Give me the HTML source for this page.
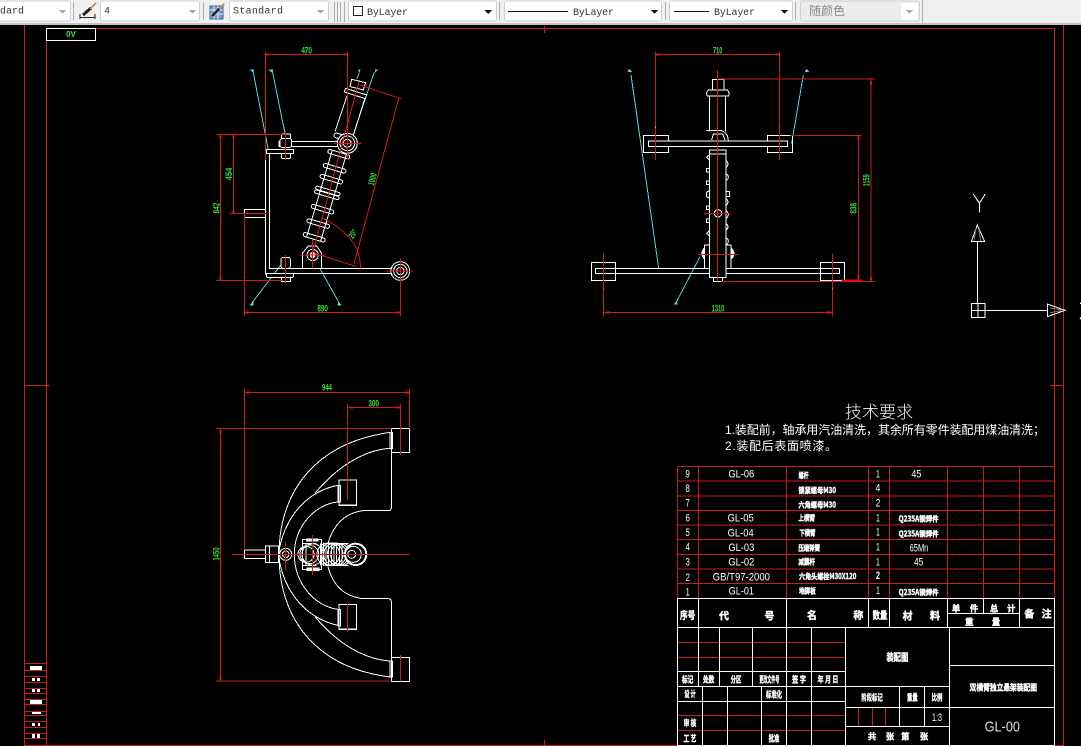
<!DOCTYPE html>
<html lang="zh">
<head>
<meta charset="utf-8">
<title>GL-00</title>
<style>
html,body{margin:0;padding:0;background:#000;width:1081px;height:746px;overflow:hidden}
svg{display:block}
.r{stroke:#cc1c1c;fill:none;stroke-width:3}
.w{stroke:#fff;fill:none;stroke-width:3}
.wb{stroke:#fff;fill:#000;stroke-width:3}
.c{stroke:#55d5d5;fill:none;stroke-width:3}
.g{fill:#35e035;font-family:"Liberation Sans",sans-serif;font-size:27px;font-weight:bold;text-anchor:middle}
.t{fill:#fff;font-family:"Liberation Sans","Noto Sans CJK SC",sans-serif;font-size:32px;text-anchor:middle}
.n{fill:#fff;stroke:#fff;stroke-width:1.2px;font-family:"Noto Sans CJK SC",sans-serif;font-size:23px;font-weight:bold}
.h{fill:#fff;stroke:#fff;stroke-width:1.2px;font-family:"Noto Sans CJK SC",sans-serif;font-size:30px;font-weight:bold;text-anchor:middle}
.s{fill:#fff;stroke:#fff;stroke-width:1.2px;font-family:"Noto Sans CJK SC",sans-serif;font-size:25px;font-weight:bold;text-anchor:middle}
.tb{font-family:"Liberation Mono",monospace;font-size:10px;fill:#333}
</style>
</head>
<body>
<svg width="1081" height="746" viewBox="0 0 1081 746" xmlns="http://www.w3.org/2000/svg" shape-rendering="crispEdges">
<rect width="1081" height="746" fill="#000"/>

<!-- toolbar -->
<rect x="0" y="0" width="1081" height="25" fill="#f0f0f0"/>
<rect x="0" y="23" width="1081" height="2" fill="#c4c4c4"/>
<g fill="#fff" stroke="#cfcfcf">
<rect x="-3" y="1" width="73.500" height="20" rx="2"/>
<rect x="100.500" y="1" width="99" height="20" rx="2"/>
<rect x="229.500" y="1" width="99" height="20" rx="2"/>
<rect x="348.500" y="1" width="148" height="20" rx="2"/>
<rect x="504.500" y="1" width="157" height="20" rx="2"/>
<rect x="669.500" y="1" width="123" height="20" rx="2"/>
<rect x="800.500" y="1" width="119" height="20" rx="2" fill="#ececec"/>
</g>
<rect x="901" y="3" width="17" height="17" fill="#fff"/>
<g stroke="#b0b0b0"><path d="M73.500 2V20M203.500 2V20M334.500 2V22M337.500 2V22M340.500 2V22M344.500 2V22M499.500 2V20M665.500 2V20M795.500 2V20M922.500 0V23"/></g>
<g fill="#a8a8a8"><path d="M59 10h7l-3.500 4zM189 10h7l-3.500 4zM317 10h7l-3.500 4zM906 10h7l-3.500 4z"/></g>
<g fill="#111"><path d="M484 10h8l-4 4zM651 10h7l-3.500 4zM781 10h7l-3.500 4z"/></g>
<text class="tb" x="0" y="13.500" textLength="24">dard</text>
<text class="tb" x="104" y="13.500">4</text>
<text class="tb" x="233" y="13.500" textLength="50">Standard</text>
<rect x="353.500" y="6.500" width="9" height="9" fill="#fff" stroke="#222"/>
<text class="tb" x="367" y="15" textLength="41">ByLayer</text>
<path d="M508 11.500H568M674 11.500H709" stroke="#111"/>
<text class="tb" x="573" y="15" textLength="41">ByLayer</text>
<text class="tb" x="714" y="15" textLength="41">ByLayer</text>
<text x="809" y="15" font-family="'Noto Sans CJK SC',sans-serif" font-size="12" fill="#8a8a8a">随颜色</text>
<!-- toolbar icons -->
<g fill="none" stroke="#222"><path d="M80 17.500H95M80 14V19M95 14V19"/><path d="M83 15L91 8" stroke-width="3"/></g>
<path d="M90 9L96 3" stroke="#c08a50" stroke-width="2"/>
<rect x="210" y="6" width="13" height="13" fill="#6f9ad0" stroke="#3e5f9a"/>
<path d="M210 10H223M214 6V19M218 6V19M210 14H223" stroke="#dfe9f6" stroke-width=".7"/>
<path d="M212 16L219 9" stroke="#222" stroke-width="2.500"/>
<path d="M219 9L224 4" stroke="#c08a50" stroke-width="2"/>

<!-- frame -->
<g fill="none" stroke="#cc1c1c">
<path d="M24.500 25V745.500H1063.500V25"/>
<path d="M46.500 28.500H1054.500V745.500M46.500 28.500V745.500"/>
<path d="M24 385.500H50M1050 385.500H1063M544.500 26V33M544.500 740V746"/>
<path d="M24 663.500H46M24 670.500H46M24 676.500H46M24 682.500H46M24 688.500H46M24 693.500H46M24 699.500H46M24 704.500H46M24 711.500H46M24 715.500H46M24 721.500H46M24 727.500H46M24 733.500H46M24 738.500H46"/>
</g>
<g fill="#fff"><rect x="30" y="666" width="12" height="4"/><rect x="32" y="678" width="3" height="3"/><rect x="37" y="678" width="3" height="3"/><rect x="32" y="689" width="3" height="3"/><rect x="37" y="689" width="3" height="3"/><rect x="30" y="700" width="12" height="4"/><rect x="32" y="712" width="9" height="2"/><rect x="32" y="723" width="3" height="3"/><rect x="38" y="723" width="2" height="3"/><rect x="32" y="734" width="3" height="4"/><rect x="37" y="734" width="3" height="4"/></g>
<rect x="46.500" y="28.500" width="49" height="12" fill="#000" stroke="#fff"/>
<text x="71" y="37" text-anchor="middle" font-family="Liberation Sans,sans-serif" font-size="8" font-weight="bold" fill="#35e035">0V</text>

<!-- LEFT VIEW -->
<g transform="translate(200,40) scale(0.33333)">
<path class="c" d="M160 98L205 330M218 98L255 280M522 98L460 285M478 98L470 118M155 790L250 665M418 790L340 650"/>
<path d="M148 88L160 100L162 88zM204 88L218 100L220 88zM474 88L482 88L478 100zM525 88L536 88L524 100zM148 796L160 796L160 784zM412 796L425 796L416 784z" fill="#55d5d5"/>
<!-- frame body -->
<path class="w" d="M196 340V702H250M208 340V685H580M196 700H580M196 328H280V340H208M196 340H205"/>
<path class="w" d="M133 533V508H196M133 533H196"/>
<path class="wb" d="M237 304H420V320H237z"/>
<rect class="wb" x="240" y="296" width="35" height="26" rx="6"/>
<rect class="wb" x="244" y="282" width="28" height="14" rx="3"/>
<rect class="wb" x="244" y="340" width="28" height="15" rx="3"/>
<rect class="wb" x="200" y="328" width="80" height="13"/>
<rect class="wb" x="243" y="652" width="28" height="33" rx="7"/>
<rect class="wb" x="200" y="700" width="80" height="12" rx="3"/>
<rect class="wb" x="244" y="712" width="28" height="13"/>
<!-- damper upper -->
<path class="w" d="M440 170L405 275M495 175L460 285"/>
<path class="wb" d="M455 118L497 128L490 150L450 140z"/>
<path class="wb" d="M437 145L500 165L496 176L433 156z"/>
<!-- damper lower -->
<g transform="translate(426,310) rotate(16.500)">
<path class="w" d="M-22 30V300M22 30V300"/>
<rect class="w" x="-30" y="-25" width="60" height="14" rx="7"/>
<rect class="w" x="-34" y="28" width="68" height="12" rx="6"/>
<rect class="w" x="-35" y="72" width="70" height="12" rx="6"/>
<rect class="w" x="-35" y="106" width="70" height="12" rx="6"/>
<rect class="w" x="-38" y="144" width="76" height="10" rx="5"/>
<rect class="w" x="-38" y="156" width="76" height="10" rx="5"/>
<rect class="w" x="-35" y="200" width="70" height="12" rx="6"/>
<rect class="w" x="-35" y="245" width="70" height="12" rx="6"/>
<rect class="w" x="-34" y="288" width="68" height="12" rx="6"/>
</g>
<path class="wb" d="M307 685V640L325 618H350L365 640V685z"/>
<circle class="wb" cx="338" cy="645" r="17"/>
<circle cx="338" cy="645" r="9" fill="#fff"/>
<circle class="wb" cx="442" cy="310" r="30"/>
<circle class="w" cx="442" cy="310" r="22"/>
<circle class="w" cx="442" cy="310" r="12"/>
<circle class="wb" cx="601" cy="693" r="28"/>
<circle class="w" cx="601" cy="693" r="20"/>
<circle class="w" cx="601" cy="693" r="11"/>
<!-- red -->
<path class="r" d="M196 35V360M442 35V290M190 44H442M50 284H255M50 722H250M62 284V722M90 520H200M100 284V520M134 520V828M601 655V828M134 818H601"/>
<path class="r" d="M596 175L462 672M480 135L605 177M345 640L470 680M477 125L335 650M402 310H485M442 260V360M257 275V360M257 645V730M560 693H640M601 655V740M298 645H375M338 600V685"/>
<path class="r" d="M365 533Q440 570 470 625Q480 650 482 685"/>
<path d="M196 44h12M430 44h12M62 284v12M62 710v12M100 284v10M100 510v10M135 818h12M590 818h11" stroke="#cc1c1c" stroke-width="6"/>
<text class="g" x="320" y="40" textLength="32" lengthAdjust="spacingAndGlyphs">470</text>
<text class="g" transform="translate(96,402) rotate(-90)" textLength="38" lengthAdjust="spacingAndGlyphs">454</text>
<text class="g" transform="translate(58,504) rotate(-90)" textLength="32" lengthAdjust="spacingAndGlyphs">842</text>
<text class="g" x="368" y="814" textLength="32" lengthAdjust="spacingAndGlyphs">890</text>
<text class="g" transform="translate(526,420) rotate(-75)" textLength="38" lengthAdjust="spacingAndGlyphs">1000</text>
<text class="g" transform="translate(466,587) rotate(-55)" textLength="26" lengthAdjust="spacingAndGlyphs">20°</text>
</g>

<!-- FRONT VIEW -->
<g transform="translate(570,40) scale(0.33333)">
<path class="c" d="M183 105L266 685M700 105L665 310M318 788L390 650"/>
<path d="M170 88L184 98L182 88zM172 96L186 96L180 88zM704 96L718 96L710 86zM310 794L324 794L320 782z" fill="#55d5d5"/>
<rect class="w" x="220" y="286" width="76" height="52"/>
<rect class="w" x="592" y="286" width="76" height="52"/>
<rect class="w" x="64" y="667" width="73" height="55"/>
<rect class="w" x="751" y="667" width="73" height="55"/>
<path class="w" d="M419 165V275M467 165V275"/>
<rect class="w" x="427" y="118" width="35" height="32"/>
<path class="wb" d="M416 150H472Q480 158 476 168H412Q406 158 416 150z"/>
<path class="w" d="M410 272H455Q475 280 475 304M425 300L430 282H458L465 300"/>
<rect class="wb" x="235" y="303" width="418" height="17"/>
<rect class="w" x="76" y="685" width="733" height="16"/>
<path class="w" d="M403 685V615H418M483 685V615H467"/>
<path d="M403 622Q386 640 403 660zM483 622Q504 640 483 660z" fill="#fff"/>
<rect class="wb" x="418" y="330" width="50" height="382"/>
<path class="w" d="M418 342H468M430 712V724H458V712"/>
<path class="w" d="M418 345L410 352L418 360M418 385H410V396H418M418 423H410V434H418M418 452L409 457V470L418 474M418 498H410V509H418M418 537H410V548H418M418 572L410 580L418 588M468 362Q480 372 468 382M468 400Q482 412 468 422M468 455H478V470H468M468 476Q480 486 468 496M468 512Q482 524 468 536M468 550Q480 560 468 570M468 592Q482 604 468 614"/>
<circle class="w" cx="444" cy="520" r="11"/>
<path class="r" d="M256 35V360M628 35V360M258 44H628M100 640V830M787 640V830M100 818H787M442 117H915M455 724H915M903 117V724M660 286H875M866 286V724M442 90V725M402 520H482M385 643H505"/>
<path d="M815 721H875" stroke="#e01010" stroke-width="6"/>
<path d="M258 44h14M616 44h14M108 818h14M770 818h14M903 125v10M866 290v10M866 705v12M903 712v10" stroke="#cc1c1c" stroke-width="6"/>
<path d="M256 260v2M628 255v2M100 745v2M787 745v2" stroke="#fff" stroke-width="3"/>
<text class="g" x="443" y="40" textLength="28" lengthAdjust="spacingAndGlyphs">710</text>
<text class="g" x="444" y="814" textLength="38" lengthAdjust="spacingAndGlyphs">1310</text>
<text class="g" transform="translate(899,421) rotate(-90)" textLength="36" lengthAdjust="spacingAndGlyphs">1159</text>
<text class="g" transform="translate(860,505) rotate(-90)" textLength="32" lengthAdjust="spacingAndGlyphs">838</text>
</g>

<!-- TOP VIEW -->
<g transform="translate(200,380) scale(0.33333)">
<rect class="w" x="574" y="145" width="55" height="73"/>
<rect class="w" x="574" y="832" width="55" height="73"/>
<rect class="w" x="417" y="300" width="53" height="76"/>
<rect class="w" x="417" y="673" width="53" height="76"/>
<rect class="w" x="570" y="157" width="8" height="48"/>
<rect class="w" x="570" y="843" width="8" height="48"/>
<rect class="w" x="414" y="316" width="8" height="50"/>
<rect class="w" x="414" y="688" width="8" height="50"/>
<path d="M417 375H470M417 748H470" stroke="#fff" stroke-width="4"/>
<path class="w" d="M570 157C470 172 395 205 335 265C265 335 237 430 237 523C237 620 265 715 335 785C395 845 470 878 570 891"/>
<path class="w" d="M570 205C490 210 410 262 345 340M570 843C490 838 410 788 345 710"/>
<path class="w" d="M414 316C340 330 285 380 255 450C244 478 237 500 237 523C237 548 244 572 255 600C285 670 340 720 414 736"/>
<path class="w" d="M414 366C345 372 283 440 283 523C283 610 345 680 414 688"/>
<path class="w" d="M574 218V382Q574 392 565 392H490C435 398 400 435 384 490M574 832V665Q574 656 565 656H490C435 650 400 620 384 560"/>
<path class="w" d="M133 510H196V536H133zM196 498H236V548H196zM208 498V548"/>
<circle class="w" cx="257" cy="523" r="18"/>
<circle class="w" cx="257" cy="523" r="10"/>
<path class="w" d="M307 478H365V568H307zM307 490H350M307 556H350M318 490V556"/>
<rect x="318" y="476" width="38" height="8" fill="#fff"/>
<rect x="320" y="563" width="38" height="10" fill="#fff"/>
<g fill="none" stroke="#fff" stroke-width="3">
<circle cx="318" cy="523" r="24"/><circle cx="328" cy="523" r="28"/><circle cx="338" cy="523" r="32"/>
<path d="M362 490V556M370 488V558M378 490V556M386 488V558M394 490V556M402 490V556M410 490V556M418 490V556M426 490V556"/>
<path d="M385 490H445M385 556H445"/>
<circle cx="385" cy="523" r="34"/><circle cx="395" cy="523" r="34"/><circle cx="405" cy="523" r="34"/><circle cx="415" cy="523" r="33"/><circle cx="425" cy="523" r="33"/>
</g>
<circle cx="467" cy="523" r="32" fill="#000" stroke="#fff" stroke-width="6"/>
<circle class="w" cx="460" cy="523" r="24"/>
<circle class="w" cx="455" cy="523" r="12"/>
<path class="r" d="M135 37H628M133 25V510M628 25V145M442 83H602M442 72V360M602 72V225M48 146H575M48 903H575M62 146V903M95 523H630M257 485V570M338 465V585M442 670V755M602 825V905"/>
<path d="M140 37h12M615 37h12M450 83h10M590 83h10M62 150v10M62 890v10" stroke="#cc1c1c" stroke-width="6"/>
<text class="g" x="381" y="32" textLength="30" lengthAdjust="spacingAndGlyphs">944</text>
<text class="g" x="521" y="79" textLength="32" lengthAdjust="spacingAndGlyphs">300</text>
<text class="g" transform="translate(58,522) rotate(-90)" textLength="40" lengthAdjust="spacingAndGlyphs">1450</text>
</g>

<!-- UCS -->
<g transform="translate(950,180) scale(0.33333)">
<rect class="w" x="64" y="370" width="41" height="43"/>
<path class="w" d="M64 391H105M84 370V413M82 185V370M105 391H292M82 135L64 185H104zM292 372V410L345 391z"/>
<path d="M78 145L72 183M86 145L92 183M300 384L335 390M300 398L335 392" stroke="#777" stroke-width="3"/>
<path class="w" d="M70 42L88 70L106 42M88 70V98M390 368L393 372M390 418L393 412"/>
</g>

<!-- TECH REQUIREMENTS -->
<text x="879" y="418" text-anchor="middle" font-family="'Noto Sans CJK SC',sans-serif" font-size="17" fill="#eee" font-weight="300">技术要求</text>
<text x="725" y="434" font-family="'Liberation Sans','Noto Sans CJK SC',sans-serif" font-size="12" fill="#fff" textLength="320" lengthAdjust="spacing">1.装配前，轴承用汽油清洗，其余所有零件装配用煤油清洗；</text>
<text x="725" y="450" font-family="'Liberation Sans','Noto Sans CJK SC',sans-serif" font-size="12" fill="#fff" textLength="112" lengthAdjust="spacing">2.装配后表面喷漆。</text>

<!-- PARTS TABLE -->
<g transform="translate(670,395) scale(0.33333)">
<path class="r" d="M22 214H1153M22 258H1153M22 303H1153M22 347H1153M22 390H1153M22 434H1153M22 478H1153M22 522H1153M22 566H1153M22 214V610M85 214V610M350 214V610M595 214V610M658 214V610M832 214V610M940 214V610M1048 214V610M1153 214V610"/>
<text class="t" x="53" y="247" textLength="13" lengthAdjust="spacingAndGlyphs">9</text>
<text class="t" x="53" y="291" textLength="13" lengthAdjust="spacingAndGlyphs">8</text>
<text class="t" x="53" y="335" textLength="13" lengthAdjust="spacingAndGlyphs">7</text>
<text class="t" x="53" y="379" textLength="13" lengthAdjust="spacingAndGlyphs">6</text>
<text class="t" x="53" y="423" textLength="13" lengthAdjust="spacingAndGlyphs">5</text>
<text class="t" x="53" y="467" textLength="13" lengthAdjust="spacingAndGlyphs">4</text>
<text class="t" x="53" y="511" textLength="13" lengthAdjust="spacingAndGlyphs">3</text>
<text class="t" x="53" y="558" textLength="13" lengthAdjust="spacingAndGlyphs">2</text>
<text class="t" x="53" y="602" textLength="13" lengthAdjust="spacingAndGlyphs">1</text>
<text class="t" x="214" y="247" textLength="77" lengthAdjust="spacingAndGlyphs">GL-06</text>
<text class="t" x="212" y="380" textLength="78" lengthAdjust="spacingAndGlyphs">GL-05</text>
<text class="t" x="212" y="424" textLength="78" lengthAdjust="spacingAndGlyphs">GL-04</text>
<text class="t" x="214" y="468" textLength="78" lengthAdjust="spacingAndGlyphs">GL-03</text>
<text class="t" x="214" y="511" textLength="78" lengthAdjust="spacingAndGlyphs">GL-02</text>
<text class="t" x="214" y="556" textLength="172" lengthAdjust="spacingAndGlyphs">GB/T97-2000</text>
<text class="t" x="214" y="598" textLength="76" lengthAdjust="spacingAndGlyphs">GL-01</text>
<text class="t" x="624" y="247" textLength="11" lengthAdjust="spacingAndGlyphs">1</text>
<text class="t" x="624" y="289" textLength="14" lengthAdjust="spacingAndGlyphs">4</text>
<text class="t" x="624" y="334" textLength="14" lengthAdjust="spacingAndGlyphs">2</text>
<text class="t" x="624" y="379" textLength="11" lengthAdjust="spacingAndGlyphs">1</text>
<text class="t" x="624" y="422" textLength="11" lengthAdjust="spacingAndGlyphs">1</text>
<text class="t" x="624" y="466" textLength="11" lengthAdjust="spacingAndGlyphs">1</text>
<text class="t" x="624" y="511" textLength="11" lengthAdjust="spacingAndGlyphs">1</text>
<text class="t" x="624" y="552" font-weight="bold" font-size="24" textLength="12" lengthAdjust="spacingAndGlyphs">2</text>
<text class="t" x="624" y="597" textLength="11" lengthAdjust="spacingAndGlyphs">1</text>
<text class="t" x="739" y="248" textLength="30" lengthAdjust="spacingAndGlyphs">45</text>
<text class="t" x="747" y="469" textLength="56" lengthAdjust="spacingAndGlyphs">65Mn</text>
<text class="t" x="746" y="511" textLength="28" lengthAdjust="spacingAndGlyphs">45</text>
<text class="n" x="386" y="249" textLength="30" lengthAdjust="spacingAndGlyphs">螺杆</text>
<text class="n" x="385" y="294" textLength="113" lengthAdjust="spacingAndGlyphs">锁紧螺母M30</text>
<text class="n" x="385" y="337" textLength="113" lengthAdjust="spacingAndGlyphs">六角螺母M30</text>
<text class="n" x="385" y="377" textLength="50" lengthAdjust="spacingAndGlyphs">上横臂</text>
<text class="n" x="388" y="421" textLength="48" lengthAdjust="spacingAndGlyphs">下横臂</text>
<text class="n" x="385" y="466" textLength="65" lengthAdjust="spacingAndGlyphs">压缩弹簧</text>
<text class="n" x="385" y="509" textLength="50" lengthAdjust="spacingAndGlyphs">减震杆</text>
<text class="n" x="387" y="552" textLength="172" lengthAdjust="spacingAndGlyphs">六角头螺栓M30X120</text>
<text class="n" x="387" y="596" textLength="50" lengthAdjust="spacingAndGlyphs">地脚板</text>
<text class="n" x="686" y="380" textLength="120" lengthAdjust="spacingAndGlyphs">Q235A钢焊件</text>
<text class="n" x="686" y="424" textLength="120" lengthAdjust="spacingAndGlyphs">Q235A钢焊件</text>
<text class="n" x="686" y="600" textLength="120" lengthAdjust="spacingAndGlyphs">Q235A钢焊件</text>
</g>

<!-- TITLE BLOCK -->
<g transform="translate(670,595) scale(0.33333)">
<path class="r" d="M22 142H526M22 187H526M22 362H526M22 407H526M565 337V394M607 337V394M646 337V394"/>
<path class="w" d="M22 10H1153V452H22zM22 97H1153M85 10V97M350 10V97M595 10V97M658 10V97M832 10V97M940 10V55M1048 10V97M832 55H1048"/>
<path class="w" d="M526 97V452M838 97V452M85 97V274M148 97V274M247 97V274M350 97V452M424 97V452M22 230H526M22 274H838M22 319H526M97 274V452M172 274V452M274 274V452M688 274V394M763 274V394M526 337H838M526 394H838M838 211H1153M838 337H1153"/>
<text class="h" x="53" y="72" textLength="46" lengthAdjust="spacingAndGlyphs">序号</text>
<text class="h" x="162" y="74">代</text><text class="h" x="298" y="74">号</text>
<text class="h" x="426" y="72">名</text><text class="h" x="565" y="72">称</text>
<text class="h" x="630" y="72" textLength="44" lengthAdjust="spacingAndGlyphs">数量</text>
<text class="h" x="713" y="74">材</text><text class="h" x="795" y="74">料</text>
<text class="s" x="858" y="50">单</text><text class="s" x="912" y="50">件</text><text class="s" x="972" y="50">总</text><text class="s" x="1024" y="50">计</text>
<text class="s" x="898" y="90">重</text><text class="s" x="978" y="90">量</text>
<text class="h" x="1078" y="68">备</text><text class="h" x="1130" y="68">注</text>
<text class="s" x="53" y="262" textLength="34" lengthAdjust="spacingAndGlyphs">标记</text>
<text class="s" x="116" y="262" textLength="34" lengthAdjust="spacingAndGlyphs">处数</text>
<text class="s" x="198" y="262" textLength="32" lengthAdjust="spacingAndGlyphs">分区</text>
<text class="s" x="298" y="262" textLength="60" lengthAdjust="spacingAndGlyphs">更改文件号</text>
<text class="s" x="387" y="262" textLength="42" lengthAdjust="spacingAndGlyphs">签 字</text>
<text class="s" x="474" y="262" textLength="62" lengthAdjust="spacingAndGlyphs">年 月 日</text>
<text class="s" x="60" y="306" textLength="34" lengthAdjust="spacingAndGlyphs">设 计</text>
<text class="s" x="312" y="308" textLength="48" lengthAdjust="spacingAndGlyphs">标准化</text>
<text class="s" x="60" y="393" textLength="38" lengthAdjust="spacingAndGlyphs">审 核</text>
<text class="s" x="60" y="439" textLength="38" lengthAdjust="spacingAndGlyphs">工 艺</text>
<text class="s" x="312" y="439" textLength="32" lengthAdjust="spacingAndGlyphs">批准</text>
<text class="s" x="606" y="316" textLength="64" lengthAdjust="spacingAndGlyphs">阶段标记</text>
<text class="s" x="727" y="316" textLength="32" lengthAdjust="spacingAndGlyphs">重量</text>
<text class="s" x="801" y="316" textLength="32" lengthAdjust="spacingAndGlyphs">比例</text>
<text class="t" x="801" y="378" textLength="30" lengthAdjust="spacingAndGlyphs">1:3</text>
<text class="s" x="606" y="433">共</text><text class="s" x="660" y="433">张</text><text class="s" x="706" y="433">第</text><text class="s" x="762" y="433">张</text>
<text class="h" x="682" y="198" textLength="66" lengthAdjust="spacingAndGlyphs">装配图</text>
<text class="s" x="1000" y="286" font-size="26" textLength="202" lengthAdjust="spacingAndGlyphs">双横臂独立悬架装配图</text>
<text x="997" y="410" text-anchor="middle" font-family="Liberation Sans,sans-serif" font-size="44" fill="#ddd" textLength="106" lengthAdjust="spacingAndGlyphs">GL-00</text>
</g>
</svg>
</body>
</html>
